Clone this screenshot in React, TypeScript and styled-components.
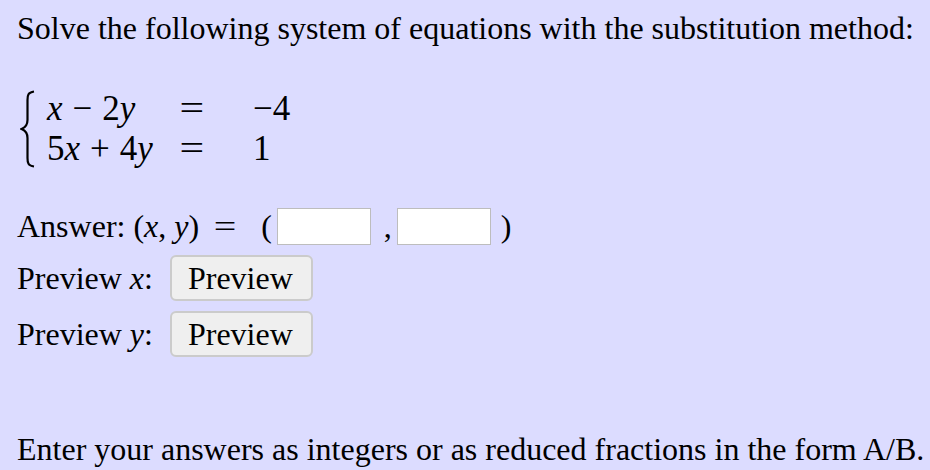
import React from "react";
import styled, { createGlobalStyle } from "styled-components";

const Global = createGlobalStyle`
  html, body { margin: 0; padding: 0; background: #dcdcff; }
  body { font-family: "Liberation Serif", "Times New Roman", serif; color: #000; }
`;

const Page = styled.div`
  box-sizing: border-box;
  min-height: 470px;
  width: 930px;
  padding: 10px 0 3px 17px;
  display: flex;
  flex-direction: column;
  font-family: "Liberation Serif", "Times New Roman", serif;
  font-size: 32px;
  line-height: 36px;
`;

const Para = styled.p`
  margin: 0;
  white-space: nowrap;
`;

const System = styled.div`
  display: flex;
  align-items: center;
  margin-top: 43px;
`;

const Brace = styled.svg`
  width: 16px;
  height: 78px;
  margin-left: 3px;
  margin-right: 11px;
  flex: none;
`;

const EqGrid = styled.div`
  display: grid;
  grid-template-columns: 125px 40px auto;
  grid-auto-rows: 40px;
  align-items: center;
  font-family: "Liberation Serif", "Times New Roman", serif;
  font-size: 35px;
`;

const Cell = styled.div<{ $center?: boolean; $pad?: number }>`
  text-align: ${(p) => (p.$center ? "center" : "left")};
  padding-left: ${(p) => p.$pad ?? 0}px;
  white-space: nowrap;
  line-height: 40px;
`;

const V = styled.i`
  font-family: "Liberation Serif", "Times New Roman", serif;
  font-style: italic;
`;

const Op = styled.span`
  margin: 0 10px;
`;

const EqSign = styled.span`
  display: inline-block;
  transform: scaleX(1.25);
`;

const AnswerRow = styled.div`
  display: flex;
  align-items: center;
  height: 40px;
  margin-top: 37px;
  white-space: nowrap;
`;

const MathGroup = styled.span`
  margin-left: 8px;
`;

const AnswerEq = styled(EqSign)`
  margin: 0 27px 0 17px;
`;

const Input = styled.input`
  box-sizing: border-box;
  width: 94px;
  height: 37px;
  margin: 0 0 0 5px;
  border: 1px solid #bdbdbd;
  background: #fff;
  padding: 0;
  font: inherit;
`;

const Comma = styled.span`
  margin: 0 0 0 13px;
`;

const Close = styled.span`
  margin-left: 10px;
`;

const PreviewRow = styled.div<{ $top: number }>`
  display: flex;
  align-items: center;
  margin-top: ${(p) => p.$top}px;
  white-space: nowrap;
`;

const Label = styled.span`
  margin-right: 17px;
`;

const Button = styled.button`
  box-sizing: border-box;
  height: 46px;
  padding: 0 18px 0 16px;
  border: 2px solid #cbcbcb;
  border-radius: 6px;
  background: #efefef;
  font-family: "Liberation Serif", "Times New Roman", serif;
  font-size: 32px;
  color: #000;
`;

const Footer = styled.p`
  margin: auto 0 0 0;
  white-space: nowrap;
`;

export default function App() {
  return (
    <>
      <Global />
      <Page>
        <Para>Solve the following system of equations with the substitution method:</Para>
        <System>
          <Brace viewBox="0 0 16 78">
            <path
              d="M14 1.5 C8 2.5 7.5 5 7.5 10 L7.5 30 C7.5 35 5.5 37.5 1.5 39 C5.5 40.5 7.5 43 7.5 48 L7.5 68 C7.5 73 8 75.5 14 76.5"
              fill="none"
              stroke="#000"
              strokeWidth="2.2"
            />
          </Brace>
          <EqGrid>
            <Cell>
              <V>x</V>
              <Op>−</Op>2<V>y</V>
            </Cell>
            <Cell $center>
              <EqSign>=</EqSign>
            </Cell>
            <Cell $pad={41}>−4</Cell>
            <Cell>
              5<V>x</V>
              <Op>+</Op>4<V>y</V>
            </Cell>
            <Cell $center>
              <EqSign>=</EqSign>
            </Cell>
            <Cell $pad={41}>1</Cell>
          </EqGrid>
        </System>
        <AnswerRow>
          Answer:
          <MathGroup>
            (<V>x</V>, <V>y</V>)
          </MathGroup>
          <AnswerEq>=</AnswerEq>(
          <Input type="text" aria-label="x" />
          <Comma>,</Comma>
          <Input type="text" aria-label="y" />
          <Close>)</Close>
        </AnswerRow>
        <PreviewRow $top={9}>
          <Label>
            Preview <V>x</V>:
          </Label>
          <Button>Preview</Button>
        </PreviewRow>
        <PreviewRow $top={10}>
          <Label>
            Preview <V>y</V>:
          </Label>
          <Button>Preview</Button>
        </PreviewRow>
        <Footer>Enter your answers as integers or as reduced fractions in the form A/B.</Footer>
      </Page>
    </>
  );
}
